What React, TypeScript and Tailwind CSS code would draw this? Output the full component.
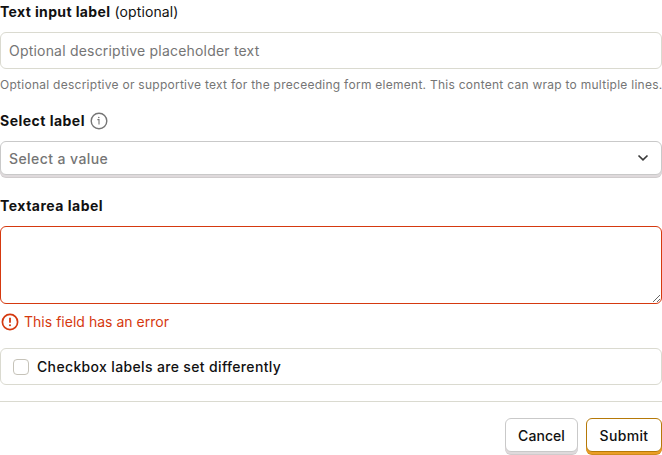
import React from "react";

function InfoIcon() {
  return (
    <svg width="18" height="18" viewBox="0 0 18 18" fill="none" className="shrink-0">
      <circle cx="9" cy="9" r="7.8" stroke="#757575" strokeWidth="1.4" />
      <path d="M7.4 7.6H9v4.9" stroke="#757575" strokeWidth="1.1" />
      <circle cx="8.8" cy="5.5" r="0.8" fill="#757575" />
    </svg>
  );
}

function ErrorIcon() {
  return (
    <svg width="18" height="18" viewBox="0 0 18 18" fill="none" className="shrink-0">
      <circle cx="9" cy="9" r="7.6" stroke="#d5390f" strokeWidth="1.7" />
      <path d="M9 4.8v5" stroke="#d5390f" strokeWidth="1.8" />
      <circle cx="9" cy="12.2" r="1.05" fill="#d5390f" />
    </svg>
  );
}

function Chevron() {
  return (
    <svg width="12" height="8" viewBox="0 0 12 8" fill="none">
      <path d="M1.5 1.5 6 5.8l4.5-4.3" stroke="#3a3a3a" strokeWidth="1.7" />
    </svg>
  );
}

export default function App() {
  return (
    <form className="flex h-[455px] w-[662px] flex-col overflow-hidden bg-white font-['Inter',sans-serif] text-sm leading-5 text-[#111]">
      <label className="mt-0.5 h-5 whitespace-pre">
        <span className="font-bold tracking-[0.37px]">Text input label</span>
        <span className="tracking-[0.12px]"> (optional)</span>
      </label>
      <input
        type="text"
        placeholder="Optional descriptive placeholder text"
        className="mt-2.5 h-[37px] w-full rounded-[6px] border border-[#dadad0] bg-white px-2 tracking-[0.2px] placeholder:text-[#757575] placeholder:opacity-100"
      />
      <p className="mt-1.5 h-5 text-xs leading-5 tracking-[0.265px] whitespace-nowrap text-[#757575]">
        Optional descriptive or supportive text for the preceeding form element. This content can wrap to multiple lines.
      </p>

      <div className="mt-4 flex h-5 items-center gap-[5px]">
        <span className="font-bold tracking-[0.48px]">Select label</span>
        <InfoIcon />
      </div>
      <button
        type="button"
        className="mt-2.5 flex h-[34px] w-full items-center justify-between rounded-[6px] border border-[#c9c9c9] bg-white pr-3 pl-2 font-medium tracking-[0.42px] text-[#757575] shadow-[0_2px_0_#dfdadc,0_3px_0_#d0cccd]"
      >
        <span className="pt-0.5">Select a value</span>
        <Chevron />
      </button>

      <label className="mt-[21px] h-5 font-bold tracking-[0.5px]">Textarea label</label>
      <textarea className="mt-2.5 block h-[78px] w-full resize-y rounded-[6px] border border-[#d5390f] bg-white p-2" />
      <div className="mt-2 flex h-5 items-center gap-[5px] pl-px text-[#d5390f]">
        <ErrorIcon />
        <span className="tracking-[0.02px]">This field has an error</span>
      </div>

      <label className="mt-4 flex h-[37px] w-full items-center gap-2 rounded-[6px] border border-[#dadad0] pl-3 font-medium tracking-[0.35px]">
        <input
          type="checkbox"
          className="h-4 w-4 shrink-0 appearance-none rounded-[4px] border border-[#c6c3b9] bg-white"
        />
        Checkbox labels are set differently
      </label>

      <div className="mt-4 flex justify-end gap-2 border-t border-[#dadad0] pt-4">
        <button
          type="button"
          className="h-[34px] w-[73px] rounded-[6px] border border-[#c9c9c9] bg-white pt-0.5 font-medium tracking-[0.05px] shadow-[0_2px_0_#dfdadc,0_3px_0_#d0cccd]"
        >
          Cancel
        </button>
        <button
          type="button"
          className="h-[34px] w-[76px] rounded-[6px] border border-[#b57908] bg-white pt-0.5 font-medium tracking-[0.36px] shadow-[0_2px_0_#eb9e25,0_3px_0_#d08b1c]"
        >
          Submit
        </button>
      </div>
    </form>
  );
}
